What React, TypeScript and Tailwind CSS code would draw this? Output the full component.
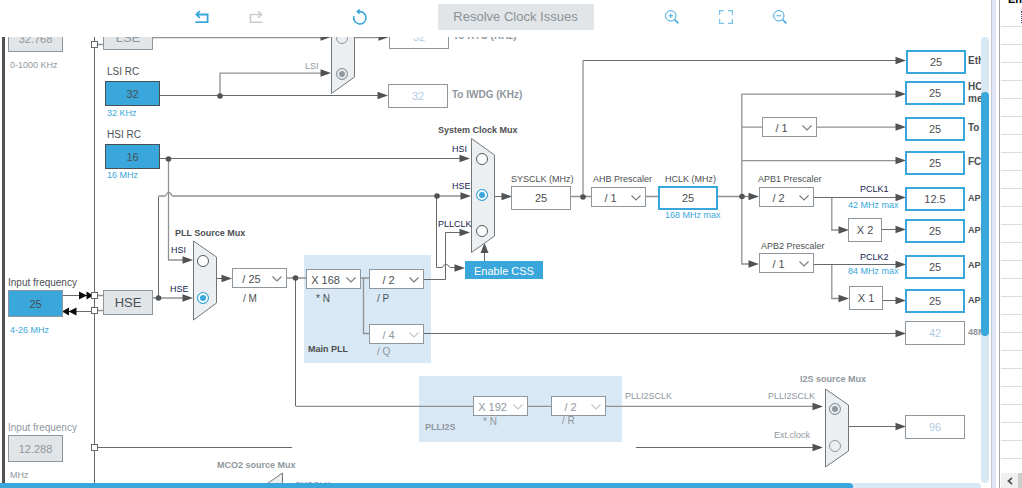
import type { ReactNode } from 'react';
import clsx from 'clsx';

type BoxTone = 'source' | 'idle' | 'plain' | 'active' | 'muted';

const boxTones: Record<BoxTone, string> = {
    source: 'h-[25px] w-[55px] border pt-px bg-[#39a7db] border-[#4b4f52] text-[#4b4f52]',
    idle: 'h-[27px] w-[55px] border pt-px bg-[#e1e5e8] border-[#8f979e] text-[#8f979e]',
    plain: 'h-6 w-[60px] border bg-white border-[#8f979e] text-[#4b4f52]',
    active: 'h-6 w-[60px] border-2 bg-white border-[#39a7db] text-[#4b4f52]',
    muted: 'h-6 w-[60px] border bg-white border-[#8f979e] text-[#b3cbe6]',
};

type ValueBoxProps = {
    id: string;
    value: string;
    tone: BoxTone;
    name?: string;
    className: string;
};

function ValueBox({ id, value, tone, name, className }: ValueBoxProps) {
    return (
        <input
            id={id}
            type="text"
            defaultValue={value}
            aria-label={name}
            disabled={tone === 'muted' || tone === 'idle'}
            className={clsx('absolute text-center text-[11px] outline-none', boxTones[tone], className)}
        />
    );
}

type DividerProps = {
    id: string;
    value: string;
    name?: string;
    disabled?: boolean;
    className: string;
};

function Divider({ id, value, name, disabled, className }: DividerProps) {
    return (
        <div className={clsx('absolute h-5 w-[55px]', className)}>
            <select
                id={id}
                aria-label={name}
                defaultValue={value}
                disabled={disabled}
                className={clsx(
                    'h-full w-full appearance-none border border-[#8f979e] bg-white pt-0.5 pr-4 pl-0 text-center text-[11px] outline-none [text-align-last:center] disabled:opacity-100',
                    disabled ? 'text-[#8f979e]' : 'text-[#4b4f52]',
                )}
            >
                <option>{value}</option>
            </select>
            <svg
                viewBox="0 0 10 6"
                fill="none"
                className={clsx(
                    'pointer-events-none absolute top-[8px] right-[5px] h-[6px] w-[10px]',
                    disabled ? 'stroke-[#c3c6c9]' : 'stroke-[#77797c]',
                )}
            >
                <path d="M0.5 0.5 L5 5 L9.5 0.5" strokeWidth="1.1" />
            </svg>
        </div>
    );
}

type MuxInputProps = {
    id: string;
    group: string;
    name?: string;
    checked?: boolean;
    disabled?: boolean;
    className: string;
};

function MuxInput({ id, group, name, checked, disabled, className }: MuxInputProps) {
    return (
        <input
            id={id}
            type="radio"
            name={group}
            aria-label={name}
            defaultChecked={checked}
            disabled={disabled}
            className={clsx(
                'absolute size-3 appearance-none rounded-full border',
                disabled
                    ? 'border-[#8f979e] bg-[#ebeff2] checked:bg-[#8f979e] checked:shadow-[inset_0_0_0_2px_#ebeff2]'
                    : 'border-[#55595c] bg-white checked:border-[#39a7db] checked:bg-[#39a7db] checked:shadow-[inset_0_0_0_2px_white]',
                className,
            )}
        />
    );
}

type TagProps = { htmlFor?: string; className: string; children: ReactNode };

function Tag({ htmlFor, className, children }: TagProps) {
    const classes = clsx('absolute leading-[10px] whitespace-nowrap', className);
    if (!htmlFor) return <span className={classes}>{children}</span>;
    return <label htmlFor={htmlFor} className={classes}>{children}</label>;
}

function Block({ className, children }: { className: string; children: ReactNode }) {
    return <div className={clsx('absolute flex items-center justify-center border border-[#8f979e]', className)}>{children}</div>;
}

// tips of the arrows that point right
const arrows = [
    [331, 37], [331, 73], [389, 37], [388, 95.5],
    [470, 158.5], [471, 196], [470, 232.5], [512, 196.5], [465, 268],
    [193, 260], [193, 298], [232, 278.5],
    [906, 60.5], [906, 94], [906, 127], [906, 160.5], [906, 197.5], [906, 229.5], [906, 264.5], [906, 300.5], [906, 333.5],
    [759, 196.5], [759, 264], [849, 230], [849, 298.5],
    [823, 406.5], [823, 447.5], [906, 426.5],
];

const dots = [[220, 96], [168.5, 159], [437, 196], [583, 197], [742, 196.5], [158.5, 298], [295.5, 278]];

const pins = [44, 295, 310, 447];

const muxes = [
    'M331.5 -3 L354.5 13 V77 L331.5 93.5 Z',
    'M471.5 138.5 L494.5 155 V236 L471.5 252.5 Z',
    'M193.5 241 L216.5 257 V303 L193.5 320 Z',
    'M825.5 389 L848.5 405 V451 L825.5 467 Z',
    'M282.5 473 L259.5 489 V520 L282.5 520 Z',
];

function Wires() {
    return (
        <svg width="1100" height="520" fill="none" className="absolute top-0 left-0">
            <path d="M3.5 0 V520" stroke="#505254" strokeWidth="3" />
            <g stroke="#66696b">
                <path d="M94.5 0 V520" />
                <path d="M160 95.5 H380 M160 158.5 H462" />
                <path d="M158.5 298 V196.5" />
                <path d="M295.5 278 V406" />
                <path d="M424 279.5 H445.5 V232.5 H462" />
                <path d="M436.5 196 V267.5 H442 Q443 267 443.5 265.5 Q446 262.5 448.5 265.5 Q449 267.5 450.5 267.5 H456" />
                <path d="M484.5 261 V250" />
                <path d="M583 60.5 H898" />
                <path d="M814 197.5 H898 M814 264.5 H898" />
                <path d="M882 229.5 H898 M883 300.5 H898" />
                <path d="M424 333.5 H898 M849 426.5 H898" />
                <path d="M97 447.5 H292 M636 447.5 H815" />
                <path d="M494 196.5 H504 M217 278.5 H224" />
            </g>
            <g stroke="#8f9193" strokeWidth="1.3">
                <path d="M153 37.5 H323 M354 37.5 H380" />
                <path d="M220 96 V73.2 H322" />
                <path d="M168.5 159 V260 H184" />
                <path d="M158.5 196 H165 Q166 195 166.5 194 Q168.5 191 171 194 Q171.5 196 173 196 H463" />
                <path d="M153 298 H184 M287 278 H306" />
                <path d="M571 196.5 H591 M646 196.5 H658 M718 196.5 H752" />
                <path d="M583 60.5 V197" />
                <path d="M898 94.2 H741.8 V264 H752" />
                <path d="M742 127.2 H762 M817 127.2 H898 M742 160.6 H898" />
                <path d="M831.8 198 V230 H842 M831.8 265 V298.5 H842" />
                <path d="M295.5 406.4 H473 M528 406.4 H551 M606 406.4 H815" />
                <path d="M97 44.5 H103 M97 295.5 H103 M97 310.5 H103" />
                <path d="M361 278 H369 M363.5 278 V333.5 H369" />
            </g>
            {muxes.map((d) => (
                <path key={d} d={d} fill="#ebeff2" stroke="#73777a" />
            ))}
            <path d="M484.5 243 l-4 10 h8 z" fill="#505254" />
            {arrows.map(([x, y]) => (
                <path key={`${x}-${y}`} d={`M${x} ${y} l-10.5 -3.7 v7.4 z`} fill="#505254" />
            ))}
            {dots.map(([x, y]) => (
                <circle key={`${x}-${y}`} cx={x} cy={y} r="2.8" fill="#505254" />
            ))}
            <path d="M63 295.5 H92 M66 311.5 H92" stroke="#66696b" />
            <path d="M79 291.5 l8 4 l-8 4 z M86.5 291.5 l7 4 l-7 4 z M76.5 307.5 l-8 4 l8 4 z M69 307.5 l-7 4 l7 4 z" fill="#0b0b0b" />
            {pins.map((y) => (
                <rect key={y} x="91.5" y={y - 2.5} width="6" height="6" fill="white" stroke="#66696b" />
            ))}
        </svg>
    );
}

function Toolbar() {
    return (
        <header className="flex h-[37px] shrink-0 items-start justify-center pt-1 pr-2.5">
            <div className="flex items-center text-[#39a7db]">
                <button type="button" aria-label="Undo" className="mr-10">
                    <svg viewBox="0 0 14 14" fill="none" stroke="currentColor" strokeWidth="1.8" className="size-[14px]">
                        <path d="M1.5 4.5 H12.6 V12.2 H0.4 M4.8 1.2 L1.4 4.5 L4.8 7.8" />
                    </svg>
                </button>
                <button type="button" aria-label="Redo" disabled className="mr-[90px] text-[#c9cbcd]">
                    <svg viewBox="0 0 14 14" fill="none" stroke="currentColor" strokeWidth="1.6" className="size-[14px]">
                        <path d="M12.5 4.5 H1.4 V12.2 H13.6 M9.2 1.2 L12.6 4.5 L9.2 7.8" />
                    </svg>
                </button>
                <button type="button" aria-label="Reset" className="mr-[71px]">
                    <svg viewBox="0 0 14 14" fill="none" stroke="currentColor" strokeWidth="1.6" className="size-[14px] overflow-visible">
                        <path d="M0.9 6 A6.2 6.2 0 1 0 7.3 1.6 H4.6" />
                        <path d="M6.6 -0.4 L4.4 1.6 L6.6 3.6" />
                    </svg>
                </button>
                <button type="button" className="h-[26px] w-[156px] bg-[#e1e5e8] text-[13px] text-[#8b9297]">
                    Resolve Clock Issues
                </button>
                <button type="button" aria-label="Zoom in" className="mr-10 ml-[71px]">
                    <svg viewBox="0 0 14 14" fill="none" stroke="currentColor" className="size-[14px]">
                        <circle cx="5.8" cy="5.8" r="5.2" />
                        <path d="M9.5 9.5 L13.4 13.4" strokeWidth="1.5" />
                        <path d="M3.5 5.8 H8.1 M5.8 3.5 V8.1" />
                    </svg>
                </button>
                <button type="button" aria-label="Fit to window" className="mr-10 text-[#7cc4e6]">
                    <svg viewBox="0 0 14 14" fill="none" stroke="currentColor" strokeWidth="1.3" className="size-[14px]">
                        <path d="M0.6 5 V0.6 H5 M9 0.6 H13.4 V5 M13.4 9 V13.4 H9 M5 13.4 H0.6 V9" />
                    </svg>
                </button>
                <button type="button" aria-label="Zoom out">
                    <svg viewBox="0 0 14 14" fill="none" stroke="currentColor" className="size-[14px]">
                        <circle cx="5.8" cy="5.8" r="5.2" />
                        <path d="M9.5 9.5 L13.4 13.4" strokeWidth="1.5" />
                        <path d="M3.5 5.8 H8.1" />
                    </svg>
                </button>
            </div>
        </header>
    );
}

function ClockTree() {
    return (
        <div className="absolute -top-[37px] left-0 text-[9px] text-[#4b4f52]">
            <div className="absolute top-[255px] left-[304px] h-[108px] w-[127px] bg-[#d9e8f5]" />
            <div className="absolute top-[376px] left-[419px] h-[66px] w-[203px] bg-[#d9e8f5]" />
            <Wires />

            {/* oscillators */}
            <ValueBox id="lse-in" value="32.768" tone="idle" name="LSE input frequency" className="top-[25px] left-[8px]" />
            <Tag htmlFor="lse-in" className="top-[60px] left-[10px] text-[#8f979e]">0-1000 KHz</Tag>
            <Block className="top-[25px] left-[103px] h-[25px] w-[50px] bg-[#e1e5e8] text-[13px] text-[#8f979e]">LSE</Block>
            <Tag htmlFor="lsi" className="top-[67px] left-[107px] text-[10px]">LSI RC</Tag>
            <ValueBox id="lsi" value="32" tone="source" className="top-[81px] left-[105px]" />
            <Tag className="top-[108px] left-[107px] text-[#39a7db]">32 KHz</Tag>
            <Tag htmlFor="hsi" className="top-[130px] left-[107px] text-[10px]">HSI RC</Tag>
            <ValueBox id="hsi" value="16" tone="source" className="top-[144px] left-[105px]" />
            <Tag className="top-[170px] left-[107px] text-[#39a7db]">16 MHz</Tag>
            <Tag htmlFor="hse-in" className="top-[278px] left-[8px] text-[10px]">Input frequency</Tag>
            <ValueBox id="hse-in" value="25" tone="source" className="top-[290px] left-[8px] h-[27px] border-[#8f979e]" />
            <Tag className="top-[325px] left-[10px] text-[#39a7db]">4-26 MHz</Tag>
            <Block className="top-[290px] left-[103px] h-[25px] w-[50px] bg-[#e1e5e8] text-[13px]">HSE</Block>
            <Tag htmlFor="i2s-in" className="top-[423px] left-[8px] text-[10px] text-[#8f979e]">Input frequency</Tag>
            <ValueBox id="i2s-in" value="12.288" tone="idle" className="top-[435px] left-[8px]" />
            <Tag className="top-[470px] left-[10px] text-[#8f979e]">MHz</Tag>

            {/* RTC and watchdog */}
            <MuxInput id="rtc-lse" group="rtc-mux" name="LSE" disabled className="top-[32px] left-[336px]" />
            <MuxInput id="rtc-lsi" group="rtc-mux" checked disabled className="top-[68px] left-[336px]" />
            <Tag htmlFor="rtc-lsi" className="top-[61px] left-[305px] text-[#8f979e]">LSI</Tag>
            <ValueBox id="rtc" value="32" tone="muted" className="top-[25px] left-[389px]" />
            <Tag htmlFor="rtc" className="top-[31px] left-[453px] text-[10px] font-bold text-[#8f979e]">To RTC (KHz)</Tag>
            <ValueBox id="iwdg" value="32" tone="muted" className="top-[84px] left-[388px]" />
            <Tag htmlFor="iwdg" className="top-[90px] left-[452px] text-[10px] font-bold text-[#8f979e]">To IWDG (KHz)</Tag>

            {/* PLL source */}
            <Tag className="top-[228px] left-[175px] font-bold">PLL Source Mux</Tag>
            <Tag htmlFor="pll-hsi" className="top-[245px] left-[171px] text-[#14224f]">HSI</Tag>
            <Tag htmlFor="pll-hse" className="top-[284px] left-[170px] text-[#14224f]">HSE</Tag>
            <MuxInput id="pll-hsi" group="pll-mux" className="top-[255px] left-[197px]" />
            <MuxInput id="pll-hse" group="pll-mux" checked className="top-[292px] left-[197px]" />
            <Divider id="pll-m" value="/ 25" className="top-[268px] left-[232px]" />
            <Tag htmlFor="pll-m" className="top-[294px] left-[243px] text-[10px]">/ M</Tag>

            {/* main PLL */}
            <Divider id="pll-n" value="X 168" className="top-[269px] left-[306px]" />
            <Tag htmlFor="pll-n" className="top-[294px] left-[316px] text-[10px]">* N</Tag>
            <Divider id="pll-p" value="/ 2" className="top-[269px] left-[369px]" />
            <Tag htmlFor="pll-p" className="top-[294px] left-[377px] text-[10px]">/ P</Tag>
            <Divider id="pll-q" value="/ 4" disabled className="top-[324px] left-[369px]" />
            <Tag htmlFor="pll-q" className="top-[347px] left-[377px] text-[10px] text-[#8f979e]">/ Q</Tag>
            <Tag className="top-[344px] left-[308px] font-bold">Main PLL</Tag>

            {/* system clock */}
            <Tag className="top-[125px] left-[438px] font-bold">System Clock Mux</Tag>
            <Tag htmlFor="sys-hsi" className="top-[144px] left-[452px] text-[#14224f]">HSI</Tag>
            <Tag htmlFor="sys-hse" className="top-[181px] left-[452px] text-[#14224f]">HSE</Tag>
            <Tag htmlFor="sys-pll" className="top-[219px] left-[438px] text-[#14224f]">PLLCLK</Tag>
            <MuxInput id="sys-hsi" group="sys-mux" className="top-[153px] left-[476px]" />
            <MuxInput id="sys-hse" group="sys-mux" checked className="top-[189px] left-[476px]" />
            <MuxInput id="sys-pll" group="sys-mux" className="top-[225px] left-[476px]" />
            <button type="button" className="absolute top-[261px] left-[465px] h-[18px] w-[78px] bg-[#39a7db] pt-0.5 text-[11px] leading-4 text-white">
                Enable CSS
            </button>
            <Tag htmlFor="sysclk" className="top-[174px] left-[511px]">SYSCLK (MHz)</Tag>
            <ValueBox id="sysclk" value="25" tone="plain" className="top-[186px] left-[511px]" />
            <Tag htmlFor="ahb" className="top-[174px] left-[593px]">AHB Prescaler</Tag>
            <Divider id="ahb" value="/ 1" className="top-[187px] left-[591px]" />
            <Tag htmlFor="hclk" className="top-[174px] left-[665px]">HCLK (MHz)</Tag>
            <ValueBox id="hclk" value="25" tone="active" className="top-[186px] left-[658px]" />
            <Tag className="top-[210px] left-[665px] text-[#39a7db]">168 MHz max</Tag>

            {/* bus prescalers */}
            <Divider id="systick" value="/ 1" name="Cortex timer prescaler" className="top-[117px] left-[762px]" />
            <Tag htmlFor="apb1" className="top-[174px] left-[758px]">APB1 Prescaler</Tag>
            <Divider id="apb1" value="/ 2" className="top-[187px] left-[759px]" />
            <Tag htmlFor="pclk1" className="top-[184px] left-[860px] text-[#14224f]">PCLK1</Tag>
            <Tag className="top-[200px] left-[848px] text-[#39a7db]">42 MHz max</Tag>
            <Block className="top-[218px] left-[848px] h-6 w-[34px] bg-white text-[11px]">X 2</Block>
            <Tag htmlFor="apb2" className="top-[241px] left-[761px]">APB2 Prescaler</Tag>
            <Divider id="apb2" value="/ 1" className="top-[253px] left-[759px]" />
            <Tag htmlFor="pclk2" className="top-[252px] left-[860px] text-[#14224f]">PCLK2</Tag>
            <Tag className="top-[266px] left-[848px] text-[#39a7db]">84 MHz max</Tag>
            <Block className="top-[286px] left-[849px] h-6 w-[34px] bg-white text-[11px]">X 1</Block>

            {/* outputs */}
            <ValueBox id="eth" value="25" tone="active" className="top-[50px] left-[906px]" />
            <Tag htmlFor="eth" className="top-[56px] left-[968px] text-[10px] font-bold">Ethernet PTP clock (MHz)</Tag>
            <ValueBox id="core" value="25" tone="active" className="top-[81px] left-[905px]" />
            <Tag htmlFor="core" className="top-[81px] left-[968px] text-[10px] leading-[12px] font-bold">
                HCLK to AHB bus, core,<br />memory and DMA (MHz)
            </Tag>
            <ValueBox id="timer" value="25" tone="active" className="top-[117px] left-[905px]" />
            <Tag htmlFor="timer" className="top-[123px] left-[968px] text-[10px] font-bold">To Cortex System timer (MHz)</Tag>
            <ValueBox id="fclk" value="25" tone="active" className="top-[151px] left-[905px]" />
            <Tag htmlFor="fclk" className="top-[157px] left-[968px] text-[10px] font-bold">FCLK Cortex clock (MHz)</Tag>
            <ValueBox id="pclk1" value="12.5" tone="active" className="top-[187px] left-[905px]" />
            <Tag htmlFor="pclk1" className="top-[193px] left-[968px] font-bold">APB1 peripheral clocks (MHz)</Tag>
            <ValueBox id="tim1" value="25" tone="active" className="top-[219px] left-[905px]" />
            <Tag htmlFor="tim1" className="top-[225px] left-[968px] font-bold">APB1 Timer clocks (MHz)</Tag>
            <ValueBox id="pclk2" value="25" tone="active" className="top-[255px] left-[905px]" />
            <Tag htmlFor="pclk2" className="top-[260px] left-[968px] font-bold">APB2 peripheral clocks (MHz)</Tag>
            <ValueBox id="tim2" value="25" tone="active" className="top-[289px] left-[905px]" />
            <Tag htmlFor="tim2" className="top-[295px] left-[968px] font-bold">APB2 timer clocks (MHz)</Tag>
            <ValueBox id="clk48" value="42" tone="muted" className="top-[321px] left-[905px]" />
            <Tag htmlFor="clk48" className="top-[327px] left-[968px] font-bold text-[#8f979e]">48MHz clocks (MHz)</Tag>

            {/* I2S */}
            <Tag className="top-[422px] left-[425px] font-bold text-[#8f979e]">PLLI2S</Tag>
            <Divider id="i2s-n" value="X 192" disabled className="top-[396px] left-[473px]" />
            <Tag htmlFor="i2s-n" className="top-[417px] left-[483px] text-[10px] text-[#8f979e]">* N</Tag>
            <Divider id="i2s-r" value="/ 2" disabled className="top-[396px] left-[551px]" />
            <Tag htmlFor="i2s-r" className="top-[416px] left-[562px] text-[10px] text-[#8f979e]">/ R</Tag>
            <Tag className="top-[391px] left-[625px] text-[#8f979e]">PLLI2SCLK</Tag>
            <Tag htmlFor="i2s-96" className="top-[374px] left-[800px] font-bold text-[#8f979e]">I2S source Mux</Tag>
            <Tag htmlFor="i2s-pll" className="top-[391px] left-[768px] text-[#8f979e]">PLLI2SCLK</Tag>
            <Tag htmlFor="i2s-ext" className="top-[430px] left-[774px] text-[#8f979e]">Ext.clock</Tag>
            <MuxInput id="i2s-pll" group="i2s-mux" checked disabled className="top-[403px] left-[829px]" />
            <MuxInput id="i2s-ext" group="i2s-mux" disabled className="top-[440px] left-[829px]" />
            <ValueBox id="i2s-96" value="96" tone="muted" className="top-[415px] left-[905px]" />

            <Tag className="top-[460px] left-[217px] font-bold text-[#8f979e]">MCO2 source Mux</Tag>
            <Tag className="top-[480px] left-[295px] text-[#8f979e]">SYSCLK</Tag>
        </div>
    );
}

function SidePanel() {
    return (
        <aside className="flex w-[23px] shrink-0 flex-col overflow-hidden border-l border-[#a3a5ad] bg-white">
            <div className="h-[9px] shrink-0 overflow-hidden pl-2 text-[11px] font-bold text-black">
                <div className="-mt-2 leading-[14px]">Enp</div>
            </div>
            <div className="ml-px flex h-[18px] shrink-0 justify-end border-b border-[#dcdcdc]">
                <div className="mt-0.5 h-3 border-r border-dotted border-[#3b4a66]" />
            </div>
            <div className="ml-px min-h-0 flex-1 overflow-hidden">
                {Array.from({ length: 24 }, (_, i) => (
                    <div key={i} className="h-[18px] border-b border-[#dcdcdc]" />
                ))}
            </div>
            <div className="ml-px flex h-[15px] shrink-0 bg-[#f0f0f0]">
                <button type="button" aria-label="Scroll left" className="flex w-[17px] shrink-0 items-center justify-center">
                    <svg viewBox="0 0 6 8" fill="none" stroke="#505254" strokeWidth="1.8" className="h-2 w-[6px]">
                        <path d="M5 0.8 L1.5 4 L5 7.2" />
                    </svg>
                </button>
                <div className="flex-1 bg-[#cdcdcd]" />
            </div>
        </aside>
    );
}

export default function App() {
    return (
        <div className="flex h-screen overflow-hidden bg-white font-['Liberation_Sans',Arial,sans-serif]">
            <main className="flex min-w-0 flex-1 flex-col">
                <Toolbar />
                <div className="flex min-h-0 flex-1">
                    <div className="relative min-w-0 flex-1 overflow-hidden">
                        <ClockTree />
                    </div>
                    <div className="mr-[2px] grid w-2 grid-rows-[55fr_244fr_147fr] rounded-full bg-[#d9e8f5]">
                        <div className="row-start-2 rounded-full bg-[#39a7db]" />
                    </div>
                </div>
                <div className="mr-[10px] h-[5px] shrink-0 rounded-tr bg-[#d9e8f5]">
                    <div className="h-full w-[87%] rounded-tr bg-[#39a7db]" />
                </div>
            </main>
            <div className="mr-[3px] w-[5px] shrink-0 border-l border-[#c5c7d3] bg-[#dfe3f6]" />
            <SidePanel />
        </div>
    );
}
